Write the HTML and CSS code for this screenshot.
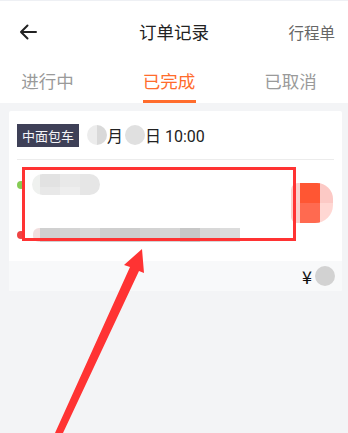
FILE: index.html
```html
<!DOCTYPE html>
<html lang="zh-CN">
<head>
<meta charset="utf-8">
<title>订单记录</title>
<link rel="stylesheet" href="styles.css">
</head>
<body>
<div class="header">
  <div class="topbar">
    <svg class="back" width="18" height="16" viewBox="0 0 18 16"><path d="M17 8H2M8.5 1.5L2 8l6.5 6.5" fill="none" stroke="#222" stroke-width="2" stroke-linecap="round" stroke-linejoin="round"/></svg>
    <div class="title">订单记录</div>
    <div class="trip">行程单</div>
  </div>
  <div class="tabs">
    <div class="tab"><span class="tab-text">进行中</span><span class="bar"></span></div>
    <div class="tab active"><span class="tab-text">已完成</span><span class="bar"></span></div>
    <div class="tab"><span class="tab-text">已取消</span><span class="bar"></span></div>
  </div>
</div>

<div class="card">
  <div class="card-head">
    <span class="tag">中面包车</span>
    <span class="date"><i class="mask m1"></i>月<i class="mask m2"></i>日 10:00</span>
  </div>
  <div class="card-body">
    <div class="routes">
      <div class="route r1">
        <span class="dot green"></span>
        <span class="blur b1"><i class="c1"></i><i class="c2"></i><i class="c3"></i><i class="c4"></i></span>
      </div>
      <div class="route r2">
        <span class="dot red"></span>
        <span class="blur b2"><i class="p0"></i><i class="p1"></i><i class="p2"></i><i class="p3"></i><i class="p4"></i><i class="p5"></i><i class="p6"></i><i class="p7"></i><i class="p8"></i><i class="p9"></i><i class="p10"></i></span>
      </div>
    </div>
    <div class="blob"><i class="q0"></i><i class="q1"></i><i class="q2"></i><i class="q3"></i><i class="q4"></i><i class="q5"></i></div>
  </div>
  <div class="card-foot">
    <span class="yen">¥</span><i class="mask price"></i>
  </div>
</div>

<div class="mark-box"></div>
<svg class="mark-arrow" width="348" height="433" viewBox="0 0 348 433"><polygon points="55,433 63,433 139,271 144,273 142,249 124,265 130,267" fill="#ff3333"/></svg>
</body>
</html>
```

FILE: styles.css
```css
* { box-sizing: border-box; }
html, body { margin: 0; padding: 0; }
body {
  width: 348px;
  height: 433px;
  overflow: hidden;
  background: #f3f4f6;
  font-family: "Noto Sans CJK SC", "Noto Sans", sans-serif;
  color: #222;
  position: relative;
}
.header {
  background: #fff;
  border-top: 1px solid #eef0f4;
}
.topbar {
  height: 61px;
  display: flex;
  align-items: center;
  padding: 0 13px 0 19px;
  position: relative;
}
.back { display: block; }
.title {
  position: absolute;
  left: 0;
  right: 0;
  text-align: center;
  font-size: 17.5px;
  color: #222;
  pointer-events: none;
}
.trip {
  margin-left: auto;
  font-size: 15.5px;
  color: #666;
}
.tabs {
  height: 41px;
  display: flex;
  justify-content: space-between;
  padding: 0 31px 0 21px;
}
.tab {
  display: flex;
  flex-direction: column;
  align-items: center;
}
.tab-text {
  font-size: 17.5px;
  line-height: 24px;
  padding-top: 7px;
  color: #9a9a9a;
}
.bar {
  margin-top: auto;
  width: 53px;
  height: 3px;
  background: transparent;
}
.tab.active .tab-text { color: #ff6c2c; }
.tab.active .bar { background: #ff6c2c; }

.card {
  margin: 8px 6px 0 9px;
  background: #fff;
  border-radius: 2px;
  overflow: hidden;
}
.card-head {
  margin: 0 8px;
  padding: 12px 0;
  border-bottom: 1px solid #ececec;
  display: flex;
  align-items: center;
  gap: 8px;
}
.tag {
  height: 23px;
  line-height: 23px;
  padding: 0 5px;
  font-size: 13px;
  color: #f4f4f8;
  background: #3e4057;
}
.date {
  display: flex;
  align-items: center;
  font-size: 16px;
  color: #222;
  font-family: "Roboto", "Noto Sans CJK SC", sans-serif;
}
.mask {
  display: inline-block;
  width: 20px;
  height: 20px;
  border-radius: 50%;
  background: #dddddd;
}
.m1 { background: linear-gradient(90deg, #ececec 50%, #d9d9d9 50%); }
.m2 { margin-left: 2px; background: #e0e0e0; }

.card-body {
  height: 101px;
  display: flex;
  padding: 0 9px 0 8px;
}
.routes {
  flex: 1;
  padding-top: 14px;
}
.route {
  display: flex;
  align-items: center;
}
.dot {
  width: 8px;
  height: 8px;
  border-radius: 50%;
  flex: none;
}
.dot.green { background: #86cc55; }
.dot.red { background: #ee4444; }
.blur { display: flex; }
.blur i { display: block; }
.b1 { margin-left: 7px; height: 21px; border-radius: 11px; overflow: hidden; }
.b1 .c1 { width: 8px; background: #eff1ef; }
.b1 .c2 { width: 20px; background: linear-gradient(#e2e2e2 60%, #e8e8e8 60%); }
.b1 .c3 { width: 20px; background: linear-gradient(#e9e9e9 60%, #eeeeee 60%); }
.b1 .c4 { width: 20px; background: #e6e6e6; }
.r2 { margin-top: 33px; }
.b2 { margin-left: 8px; height: 14px; }
.b2 i { width: 20px; }
.b2 .p0 { width: 7px; background: #f1dfdf; border-radius: 6px 0 0 6px; }
.b2 .p1 { background: #d0d0d0; }
.b2 .p2 { background: #d4d4d4; }
.b2 .p3 { background: #d9d9d9; }
.b2 .p4 { background: #cfcfcf; }
.b2 .p5 { background: #cdcdcd; }
.b2 .p6 { background: #d3d3d3; }
.b2 .p7 { background: #d6d6d6; }
.b2 .p8 { background: #c7c7c7; }
.b2 .p9 { background: #d8d8d8; }
.b2 .p10 { background: #dcdcdc; }

.blob {
  flex: none;
  align-self: flex-start;
  margin-top: 23px;
  display: grid;
  grid-template-columns: 9px 20px 13px;
  grid-template-rows: 20px 20px;
  border-radius: 7px 16px 18px 6px;
  overflow: hidden;
}
.blob i { display: block; }
.blob .q0 { background: #fbd2ce; }
.blob .q1 { background: #ff5633; }
.blob .q2 { background: #fcc9c5; }
.blob .q3 { background: #fbd0cc; }
.blob .q4 { background: #ff6a50; }
.blob .q5 { background: #ffd7d3; }

.card-foot {
  height: 30px;
  background: #f8f9fa;
  display: flex;
  align-items: center;
  justify-content: flex-end;
  padding-right: 7px;
  gap: 3px;
}
.yen {
  font-size: 18px;
  line-height: 20px;
  color: #111;
  font-family: "Noto Sans CJK SC", sans-serif;
}
.price { background: #d2d2d2; }

.mark-box {
  position: absolute;
  left: 22px;
  top: 167px;
  width: 274px;
  height: 74px;
  border: 3px solid #ff3333;
}
.mark-arrow {
  position: absolute;
  left: 0;
  top: 0;
  display: block;
}
```
